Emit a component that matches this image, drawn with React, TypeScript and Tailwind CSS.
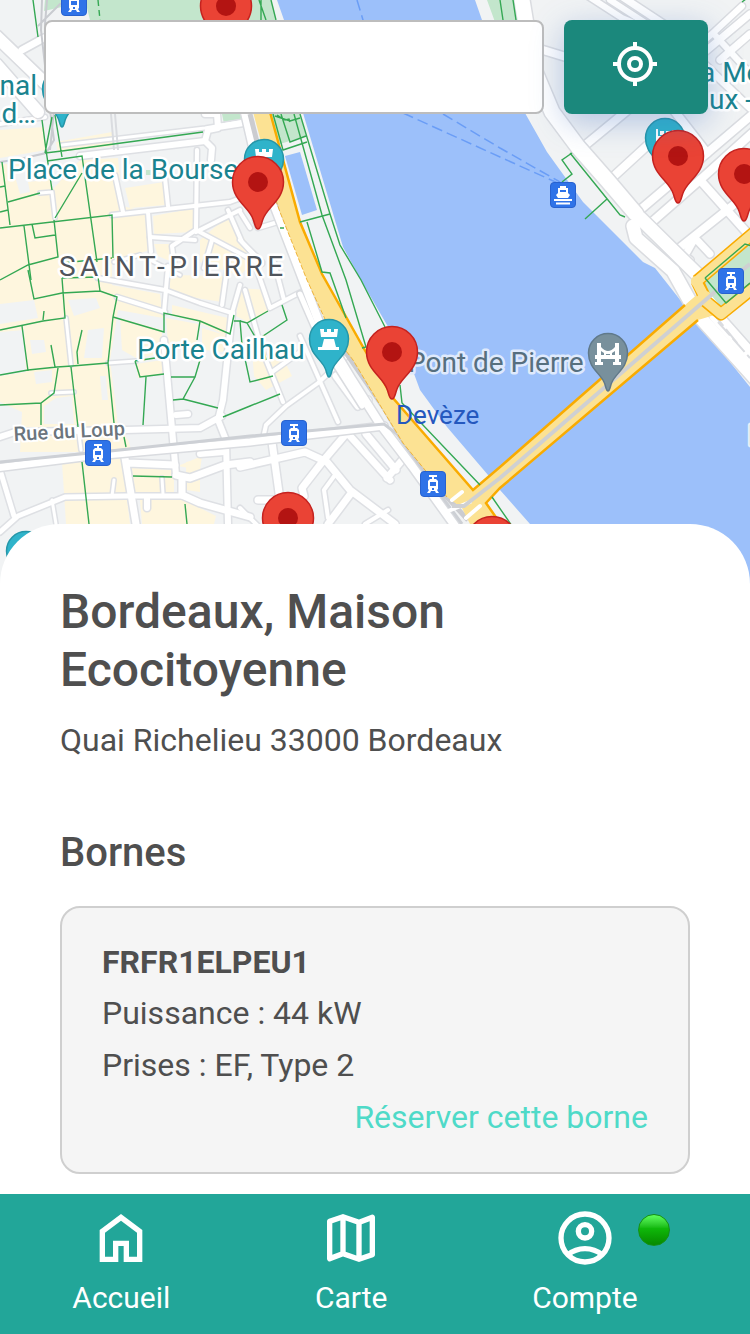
import type { ReactNode } from "react";

type Road = { d: string; w: number };

const YELLOW_BLOCKS = [
  "0,130 44,127 46,150 0,158",
  "56,142 112,132 113,146 58,152",
  "0,164 46,163 52,190 80,160 118,158 122,206 148,212 150,250 112,262 112,285 160,294 163,318 118,310 110,360 118,425 128,440 132,452 20,452 22,412 0,402 0,376 26,372 24,330 0,332",
  "125,188 164,182 166,205 130,208",
  "153,216 195,208 194,232 154,234",
  "154,244 174,244 172,262 158,256",
  "200,240 230,214 256,258 240,276 200,262",
  "170,275 226,276 222,302 170,294",
  "172,305 228,318 226,336 198,322 172,316",
  "240,288 266,290 268,312 248,322 236,316",
  "120,318 162,330 162,354 136,358 122,350",
  "166,318 198,324 196,350 168,344",
  "136,364 162,360 164,374 138,378",
  "202,328 228,336 224,352 202,350",
  "252,350 280,352 292,376 266,390 254,376",
  "62,462 122,458 130,524 66,524",
  "132,468 174,470 174,492 134,492",
  "140,500 184,500 216,516 214,524 142,524",
  "186,462 200,460 200,492 186,490",
  "178,466 202,456 200,470",
];

const GREY_BLOCKS = [
  "10,172 46,168 46,180 28,182 30,192 20,194 16,180 10,180",
  "0,304 34,300 38,318 0,324",
  "68,300 96,298 100,308 74,316",
  "84,358 88,330 104,328 102,358",
  "56,398 72,396 74,424 44,424 44,406",
  "30,340 44,340 46,352 32,354",
  "100,376 106,376 108,400 102,400",
  "116,404 126,402 128,424 118,426",
  "34,372 52,370 52,382 36,384",
];

const MINOR_ROADS: Road[] = [
  { d: "M0 124L45 117", w: 4 },
  { d: "M62 145L205 128L250 120", w: 3 },
  { d: "M115 175L123 212M112 215L230 202L262 190M148 212L151 252M165 178L168 206", w: 4 },
  { d: "M197 150L196 230L172 246L174 262M150 237L195 240M196 232L240 210M196 230L260 264M228 210L242 242L262 264M212 240L204 268", w: 4 },
  { d: "M140 255L180 275M114 262L140 255M52 192L55 218M40 193L52 192", w: 3 },
  { d: "M98 278L165 290L200 303L232 313M117 297L165 312M168 266L164 312M228 262L222 305M240 285L232 313", w: 4 },
  { d: "M232 313L223 400L218 420L226 440L228 524M164 340L173 440L176 475", w: 6 },
  { d: "M0 437L15 432L125 430L200 428L222 416", w: 6 },
  { d: "M176 415L188 414M200 454L224 452M147 497L147 508", w: 6 },
  { d: "M125 458L136 524M128 463L175 465M176 475L190 478L225 465L250 462M182 478L182 495L200 503L250 517", w: 7 },
  { d: "M0 532L18 516L65 497L125 496L182 496M0 470L14 516", w: 5 },
  { d: "M52 500L56 524M114 480L112 496M162 478L163 494M108 363L136 361M66 318L71 365M51 393L74 392M78 427L81 450", w: 3 },
  { d: "M245 290L262 350L283 402M257 270L270 308L301 292M274 262L284 300", w: 4 },
  { d: "M272 372L300 352M300 336L338 422M345 358L318 383L286 406L266 425L264 434", w: 4 },
  { d: "M336 376L358 406L368 400", w: 7 },
  { d: "M346 434L323 461L302 488L304 496M350 436L390 480M366 434L396 470M387 478L404 458", w: 7 },
  { d: "M240 467L305 452L327 462L350 490L395 524M272 442L280 500M258 500L285 500M328 524L352 492", w: 7 },
  { d: "M335 475L324 490L328 518M365 524L388 510M240 508L258 526", w: 4 },
  { d: "M255 220L258 228L278 222M240 212L250 228M240 240L262 262", w: 4 },
  { d: "M205 114L217 114L218 128L208 130L205 141L212 148L211 160M218 127L250 122", w: 6 },
  { d: "M80 156L205 141", w: 6 },
];

const EAST_ROADS: Road[] = [
  { d: "M588 -4L622 18L660 34M610 0L650 26L690 40M640 96L713 33L742 6M713 33L770 95", w: 6 },
  { d: "M618 -6L665 25L700 60L750 108M700 56L750 14M720 60L750 34", w: 7 },
  { d: "M543 50L566 57M583 147L640 100M640 210L760 108M652 222L700 180L760 126", w: 8 },
  { d: "M613 177L650 143M672 108L707 153M700 180L750 236M677 250L727 210L760 184", w: 8 },
  { d: "M687 252L695 238L710 254M682 254L690 260", w: 7 },
];

const GREEN_PATHS = [
  "M33 0L38 37M42 120L46 150L52 190M55 115L62 157M45 153L62 151L203 132M52 117L45 153",
  "M47 161L82 156L97 262M2 162L10 225M8 202L40 193M82 173L55 218M0 187L5 186M0 212L8 210",
  "M0 228L112 215L113 258M24 226L31 280M32 224L35 238L55 235M54 220L58 257L28 265L0 280M62 263L112 258",
  "M28 270L34 299L62 293L100 291L117 297L113 317L108 363M62 278L65 318L43 321L0 330M62 278L98 277L100 291",
  "M44 311L43 320M22 326L28 371M0 375L28 370L57 367L72 366L108 363M51 345L55 367M82 330L77 352L78 364",
  "M58 368L54 393L41 403L0 405M41 403L41 425M71 367L78 427M82 462L89 524M108 363L114 423M124 437L126 447",
  "M113 317L164 332V313L200 321L230 334L234 315M200 321L197 340M135 361L155 358M135 361L140 377L164 374",
  "M146 377L143 425M171 377H195L200 360M195 377L183 399L173 400M183 399L218 408M223 417L250 406L280 394",
  "M133 476L172 477M185 504L187 524M240 321L247 323L268 311M247 323L257 340L287 320L282 305",
  "M240 321L242 345L250 382L273 376M262 340L266 360M234 321H241",
  "M259 0L266 20M261 0V20M271 0L276 20M300 114L330 214L340 245L361 280L385 327M294 114L322 215L346 280L366 347L362 348",
  "M273 114L283 150L307 142M281 114L290 142L306 136M275 116L290 121L300 118M277 115L285 120L289 119L290 122",
  "M300 222L330 214M307 222L322 272L330 273L346 318M400 385L402 403L480 485M492 497L512 526M280 228H284",
  "M572 153L562 160L572 174L562 182M570 153L608 200L620 215L625 217M607 199L585 219",
  "M742 2L750 -4M500 0L503 20M513 0L516 20M705 278L726 303L750 283M705 278L745 244L752 246",
];

function RedPin({ x, y }: { x: number; y: number }) {
  return (
    <g transform={`translate(${x} ${y})`}>
      <path
        d="M0 47C-3 47-3 42-5 37C-9 25-25.500 18-25.500 0A25.500 25.500 0 0 1 25.500 0C25.500 18 9 25 5 37C3 42 3 47 0 47Z"
        fill="#ea4335"
        stroke="#c5221f"
        strokeWidth="1.500"
      />
      <circle r="10" fill="#b31412" />
    </g>
  );
}

function PlacePin({ x, y, fill, stroke, children }: { x: number; y: number; fill: string; stroke: string; children?: ReactNode }) {
  return (
    <g transform={`translate(${x} ${y})`}>
      <path
        d="M0 38C-2 38-2 33-4 29C-8 20-19.500 15-19.500 0A19.500 19.500 0 0 1 19.500 0C19.500 15 8 20 4 29C2 33 2 38 0 38Z"
        fill={fill}
        stroke={stroke}
        strokeWidth="1.500"
      />
      {children}
    </g>
  );
}

function Rook() {
  return <path d="M-9-10H-5V-7H-2V-10H2V-7H5V-10H9L8-2H-8ZM-5 0H5L7 8H10V11H-11V8H-7Z" fill="#fff" />;
}

function TramStop({ x, y }: { x: number; y: number }) {
  return (
    <g transform={`translate(${x} ${y})`}>
      <rect x="-12.500" y="-12.500" width="25" height="25" rx="3.500" fill="#2f73e8" stroke="#2862cf" />
      <path
        fillRule="evenodd"
        fill="#fff"
        d="M-4-9H4V-7H1V-5H3L5-3V5L4 6L6 9H3L2 7H-2L-3 9H-6L-4 6L-5 5V-3L-3-5H-1V-7H-4ZM-3-2V2H3V-2ZM-1 4V6H1V4Z"
      />
    </g>
  );
}

function FerryStop({ x, y }: { x: number; y: number }) {
  return (
    <g transform={`translate(${x} ${y})`}>
      <rect x="-12.500" y="-12.500" width="25" height="25" rx="3.500" fill="#2f73e8" stroke="#2862cf" />
      <path d="M-3-9H3V-7H5V-2L7 0L5 3H-5L-7 0L-5-2V-7H-3ZM-9 4H9V6H-9ZM-7 7.500H7V9.500H-7Z" fill="#fff" />
      <path d="M-3-5H3V-3H-3Z" fill="#2f73e8" />
    </g>
  );
}

function Roads({ roads, casing }: { roads: Road[]; casing: string }) {
  return (
    <g fill="none" strokeLinecap="round" strokeLinejoin="round">
      {roads.map((r) => (
        <path key={"c" + r.d} d={r.d} stroke={casing} strokeWidth={r.w + 3} />
      ))}
      {roads.map((r) => (
        <path key={r.d} d={r.d} stroke="#fff" strokeWidth={r.w} />
      ))}
    </g>
  );
}

function CityMap() {
  return (
    <svg viewBox="0 0 750 584" preserveAspectRatio="xMidYMin slice" className="block h-[584px] w-full" role="img" aria-label="Carte">
      <rect width="750" height="584" fill="#f1f3f4" />
      <g fill="#fef6de">
        {YELLOW_BLOCKS.map((p) => (
          <polygon key={p} points={p} />
        ))}
      </g>
      <g fill="#f1f3f4">
        {GREY_BLOCKS.map((p) => (
          <polygon key={p} points={p} />
        ))}
      </g>
      <g fill="#c3e6cc">
        <path d="M45 0H62V7L44 11ZM85 0H256L264 20H90ZM222 114H244V120L224 124ZM270 114H300L306 136L280 144ZM250 0H271L276 20H262ZM146 170H152V175H146ZM487 0H515L518 22H495Z" />
      </g>
      <path
        d="M277 0H475L482 20L525 113L547 152L583 202L643 262L655 268L685 306L750 387V584H570L530 524L500 490L488 475L447 427L420 390L406 352L387 325L361 280L343 247L303 113L284 20Z"
        fill="#9cc0fa"
      />
      <path d="M285 156L300 152L317 210L302 215Z" fill="#9cc0fa" />
      <path d="M357 0L363 20L372 50M403 113L500 157L560 184M443 114L500 148L560 182" fill="none" stroke="#6a9df6" strokeWidth="1.500" strokeDasharray="11 5" />

      <Roads roads={MINOR_ROADS} casing="#dee0e4" />
      <Roads roads={EAST_ROADS} casing="#dadce0" />
      <Roads
        roads={[
          { d: "M522 0L533 67L552 112L578 147L607 180L636 214", w: 15 },
          { d: "M633 226L636 238L673 271L697 314L760 384", w: 13 },
          { d: "M640 218L700 277L716 316L762 368", w: 13 },
          { d: "M-4 36L50 88M-4 64L38 112", w: 12 },
          { d: "M22 50L44 38", w: 7 },
        ]}
        casing="#dadce0"
      />
      <path d="M718 322L750 358M712 312L738 344" stroke="#dadce0" strokeWidth="2" strokeDasharray="18 4" />

      <Roads
        roads={[
          { d: "M-4 468L83 457L250 442L384 426", w: 7 },
          { d: "M244 108L256 160L276 210L300 272L322 330L352 380L380 424L412 466L458 530", w: 8 },
          { d: "M300 294L320 340L362 406", w: 5 },
        ]}
        casing="#dadce0"
      />
      <path d="M115 114L118 150M111 114L114 150" fill="none" stroke="#dadce0" strokeWidth="2" />
      <path d="M42 0L41 30L50 110L54 140L46 153L20 159L0 162M47 0L45 24L54 110L50 150M38 26L60 4L85 2" fill="none" stroke="#c9cbd0" strokeWidth="2" />
      <path d="M0 462L120 450L250 436L384 424L397 434L440 494L462 524" fill="none" stroke="#cdd0d5" strokeWidth="3" />
      <path d="M250 114L262 162L284 216L314 286L344 350L384 408L404 442L444 494L468 520" fill="none" stroke="#cbccd0" strokeWidth="5" />

      <path
        d="M253 112L270 112L300 222L322 274L363 347L393 398L473 490L500 467L685 305L700 292L718 314L698 320L500 488L487 503L500 524H470L462 508L447 497L403 443L383 410L353 360L330 330L307 280L280 212Z"
        fill="#fce293"
      />
      <path d="M270 112L300 222L322 274L363 347L393 398L473 490L500 467L685 305M698 320L500 488L486 503L502 526" fill="none" stroke="#f9ab00" strokeWidth="2.500" />
      <path d="M262 160L280 212L307 280L330 330L353 360L383 410L403 443L447 497" fill="none" stroke="#f0b53c" strokeWidth="1" strokeDasharray="5 2" />
      <path d="M452 500L462 492M466 518L480 506M446 512L470 502" stroke="#fff" strokeWidth="4" strokeLinecap="round" />
      <path d="M700 282L743 243L756 240V284L722 308Z" fill="#c3e6cc" />
      <path d="M697 281L756 231M703 299L721 314L756 286M697 281L705 298" fill="none" stroke="#f9ab00" strokeWidth="13" strokeLinejoin="round" />
      <path d="M696 282L757 230M692 306L706 296M702 298L721 314L757 285M696 281L705 298" fill="none" stroke="#fce293" strokeWidth="10" strokeLinejoin="round" strokeLinecap="round" />
      <path d="M452 506H464L500 478L717 290L750 264" fill="none" stroke="#cfd0d2" strokeWidth="4" />

      <g fill="none" stroke="#34a853" strokeWidth="1.400">
        {GREEN_PATHS.map((d) => (
          <path key={d} d={d} />
        ))}
        <path d="M98 0L100 20" strokeDasharray="6 4" />
      </g>

      <PlacePin x={62} y={89} fill="#2fb3ca" stroke="#2596a8" />
      <PlacePin x={264} y={159} fill="#2fb3ca" stroke="#2596a8">
        <Rook />
      </PlacePin>
      <PlacePin x={329} y={339} fill="#2fb3ca" stroke="#2596a8">
        <Rook />
      </PlacePin>
      <PlacePin x={26} y={551} fill="#2fb3ca" stroke="#2596a8" />
      <PlacePin x={665} y={138} fill="#2fb3ca" stroke="#2596a8">
        <path d="M-9-9H-7V-2H7V-8H9V8H7V3H-7V8H-9ZM-5-7H-1V-3H-5ZM1-7H7V-4H1Z" fill="#fff" />
      </PlacePin>
      <PlacePin x={608} y={353} fill="#78909c" stroke="#60798a">
        <path d="M-11-10H-7V-6Q0 2 7-6V-10H11V2H13V6H11V9H13V12H5V9H7V6H-7V9H-5V12H-13V9H-11V6H-13V2H-11ZM-7-2V2H-4V0ZM-2 1V2H2V1ZM7-2V2H4V0Z" fill="#fff" fillRule="evenodd" />
      </PlacePin>

      <TramStop x={74} y={3} />
      <TramStop x={98} y={453} />
      <TramStop x={294} y={433} />
      <TramStop x={433} y={484} />
      <TramStop x={731} y={281} />
      <FerryStop x={563} y={195} />

      <g className="text-[28px] [paint-order:stroke]" stroke="#fff" strokeWidth="5" strokeLinejoin="round" fill="#1a838f">
        <text x="37" y="95" textAnchor="end">nal</text>
        <text x="36" y="123" textAnchor="end">d…</text>
        <text x="8" y="179">Place de la Bourse</text>
        <text x="137" y="359">Porte Cailhau</text>
        <text x="700" y="82">a Mé</text>
        <text x="709" y="109">ux -</text>
        <text x="408" y="372" fill="#566f7f" stroke="#dfeafc">Pont de Pierre</text>
        <text x="748" y="445" fill="#c77b3a" stroke="#e6eefc">M</text>
        <text x="59" y="276" fill="#50555c" className="tracking-[0.16em]">SAINT-PIERRE</text>
      </g>
      <text x="396" y="424" className="text-[26px]" fill="#2458be">Devèze</text>
      <text x="14" y="441" transform="rotate(-3 14 441)" className="text-[20px] font-medium [paint-order:stroke]" stroke="#fff" strokeWidth="4" fill="#6c757d">
        Rue du Loup
      </text>

      <RedPin x={226} y={6} />
      <RedPin x={258} y={182} />
      <RedPin x={392} y={352} />
      <RedPin x={678} y={156} />
      <RedPin x={744} y={174} />
      <RedPin x={288} y={518} />
      <RedPin x={492} y={542} />
    </svg>
  );
}

function LocateIcon() {
  return (
    <svg viewBox="0 0 24 24" className="size-12" fill="none" stroke="currentColor" strokeWidth="2" aria-hidden="true">
      <circle cx="12" cy="12" r="8" />
      <circle cx="12" cy="12" r="3" />
      <path d="M12 1V4M12 20V23M1 12H4M20 12H23" />
    </svg>
  );
}

function HomeIcon() {
  return (
    <svg viewBox="0 0 24 24" className="size-16" fill="currentColor" aria-hidden="true">
      <path d="M6 19h3v-6h6v6h3v-9l-6-4.500L6 10v9Zm-2 2V9l8-6 8 6v12h-7v-6h-2v6H4Z" />
    </svg>
  );
}

function MapIcon() {
  return (
    <svg viewBox="0 0 24 24" className="size-16" fill="currentColor" aria-hidden="true">
      <path d="m15 21-6-2.100-4.650 1.800q-.5.200-.925-.112T3 19.750v-14q0-.325.188-.575T3.700 4.800L9 3l6 2.100 4.650-1.800q.5-.2.925.112T21 4.250v14q0 .325-.188.575t-.512.375L15 21Zm-1-2.450V6.850l-4-1.400v11.700l4 1.400Zm2 0 3-1V5.700l-3 1.150v11.700ZM5 18.300l3-1.150V5.450l-3 1v11.850Z" />
    </svg>
  );
}

function AccountIcon() {
  return (
    <svg viewBox="0 0 24 24" className="size-16" fill="none" stroke="currentColor" strokeWidth="2" aria-hidden="true">
      <circle cx="12" cy="12" r="9" />
      <circle cx="12" cy="9.500" r="2.500" />
      <path d="M5.600 18.300C7.400 16.800 9.600 16 12 16s4.600.8 6.400 2.300" />
    </svg>
  );
}

function NavLink({ href, label, children }: { href: string; label: string; children: ReactNode }) {
  return (
    <a href={href} className="flex flex-col items-center gap-2">
      {children}
      <span className="text-[30px] leading-10">{label}</span>
    </a>
  );
}

export default function App() {
  return (
    <div className="flex min-h-screen flex-col bg-white font-['Roboto',sans-serif] text-[#4f4f4f]">
      <section className="relative">
        <CityMap />
        <form className="absolute inset-x-0 top-0 flex gap-5 pt-5 pr-[42px] pl-11" onSubmit={(e) => e.preventDefault()}>
          <input
            type="text"
            aria-label="Rechercher une adresse"
            className="h-[94px] min-w-0 flex-1 rounded-lg border-2 border-[#bdbdbd] bg-white px-5 text-[32px] outline-none"
          />
          <button
            type="button"
            aria-label="Me localiser"
            className="flex h-[94px] w-36 items-center justify-center rounded-lg bg-[#1b887c] pr-2 pb-1.5 pl-1.5 text-white shadow-[0_8px_32px_rgba(60,105,190,0.35)]"
          >
            <LocateIcon />
          </button>
        </form>
      </section>

      <main className="relative -mt-[60px] flex-1 rounded-t-[60px] bg-white px-[60px] pt-[59px] pb-5">
        <h1 className="text-[48px] leading-[58px] font-medium">Bordeaux, Maison Ecocitoyenne</h1>
        <p className="mt-[18px] text-[32px] leading-[46px]">Quai Richelieu 33000 Bordeaux</p>
        <h2 className="mt-[66px] text-[40px] leading-[48px] font-medium">Bornes</h2>
        <article className="mt-[29px] rounded-[20px] border-2 border-[#cfcfcf] bg-[#f5f5f5] px-10 pt-[29px] pb-[29px]">
          <h3 className="text-[32px] leading-[50px] font-bold">FRFR1ELPEU1</h3>
          <p className="text-[32px] leading-[52px]">Puissance : 44 kW</p>
          <p className="text-[32px] leading-[52px]">Prises : EF, Type 2</p>
          <a href="#reserver" className="block text-right text-[32px] leading-[52px] text-[#4fdac8]">
            Réserver cette borne
          </a>
        </article>
      </main>

      <nav className="sticky bottom-0 flex h-[140px] items-start justify-around bg-[#22a699] pt-3 text-white">
        <NavLink href="#accueil" label="Accueil">
          <HomeIcon />
        </NavLink>
        <NavLink href="#carte" label="Carte">
          <MapIcon />
        </NavLink>
        <div className="flex">
          <NavLink href="#compte" label="Compte">
            <AccountIcon />
          </NavLink>
          <span className="flex w-10 pt-2" role="status" aria-label="En ligne">
            <span className="size-8 rounded-full border border-[#159015] bg-linear-to-b from-[#5dff5d] via-[#0fb80a] via-45% to-[#078a00]" />
          </span>
        </div>
      </nav>
    </div>
  );
}
